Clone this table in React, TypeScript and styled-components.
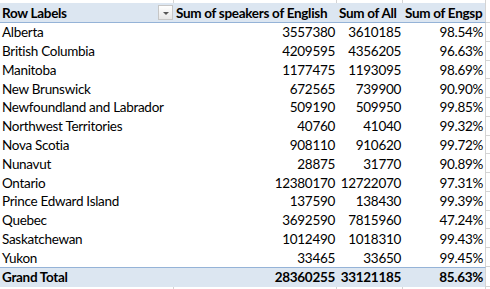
import React from "react";
import styled, { createGlobalStyle } from "styled-components";

const rows = [
  ["Alberta", "3557380", "3610185", "98.54%"],
  ["British Columbia", "4209595", "4356205", "96.63%"],
  ["Manitoba", "1177475", "1193095", "98.69%"],
  ["New Brunswick", "672565", "739900", "90.90%"],
  ["Newfoundland and Labrador", "509190", "509950", "99.85%"],
  ["Northwest Territories", "40760", "41040", "99.32%"],
  ["Nova Scotia", "908110", "910620", "99.72%"],
  ["Nunavut", "28875", "31770", "90.89%"],
  ["Ontario", "12380170", "12722070", "97.31%"],
  ["Prince Edward Island", "137590", "138430", "99.39%"],
  ["Quebec", "3692590", "7815960", "47.24%"],
  ["Saskatchewan", "1012490", "1018310", "99.43%"],
  ["Yukon", "33465", "33650", "99.45%"],
];

const GlobalStyle = createGlobalStyle`
  html, body {
    margin: 0;
    padding: 0;
    background: #fff;
  }
  body {
    font-family: Lato, "Liberation Sans", sans-serif;
    font-size: 13.5px;
    letter-spacing: -0.3px;
    color: #000;
  }
`;

const GRID = "#d4d4d4";
const BLUE_LINE = "#95b3d7";
const FILL = "#dce6f1";

type Kind = "head" | "total" | "body" | "edge";

const Sheet = styled.div`
  width: 490px;
  height: 289px;
  overflow: hidden;
`;

const Row = styled.div<{ $h: string; $kind?: Kind }>`
  display: grid;
  grid-template-columns: 174px 163px 66px 83px 1fr;
  height: ${(p) => p.$h};
  box-sizing: border-box;
  font-weight: ${(p) => (p.$kind === "head" || p.$kind === "total" ? 700 : 400)};
`;

const Cell = styled.div<{ $kind?: Kind; $right?: boolean; $last?: boolean }>`
  display: flex;
  align-items: center;
  justify-content: ${(p) => (p.$right ? "flex-end" : "space-between")};
  padding: ${(p) => (p.$right ? "0 2px 0 0" : "0 0 0 2px")};
  box-sizing: border-box;
  white-space: nowrap;
  overflow: hidden;
  background: ${(p) => (p.$kind === "head" || p.$kind === "total" ? FILL : "#fff")};
  border-right: ${(p) => (p.$kind === "edge" || p.$last ? `1px solid ${GRID}` : "none")};
  border-bottom: ${(p) => (p.$kind === "head" ? `1px solid ${BLUE_LINE}` : "none")};
  border-top: ${(p) => (p.$kind === "total" ? `1px solid ${BLUE_LINE}` : "none")};
`;

const Spare = styled.div<{ $line?: boolean }>`
  border-bottom: ${(p) => (p.$line ? `1px solid ${GRID}` : "none")};
  box-sizing: border-box;
`;

const FilterButton = styled.div`
  width: 15px;
  height: 15px;
  margin-right: 1px;
  flex: none;
  box-sizing: border-box;
  border: 1px solid #c6c6c6;
  background: linear-gradient(#ffffff, #e6e6e6);
  display: flex;
  align-items: center;
  justify-content: center;
  &::after {
    content: "";
    border-left: 3px solid transparent;
    border-right: 3px solid transparent;
    border-top: 3px solid #555;
    margin-top: 1px;
  }
`;

export default function App() {
  return (
    <Sheet>
      <GlobalStyle />
      <Row $h="3px" $kind="edge">
        <Cell $kind="edge" />
        <Cell $kind="edge" />
        <Cell $kind="edge" />
        <Cell $kind="edge" />
        <Spare />
      </Row>
      <Row $h="20px" $kind="head">
        <Cell $kind="head">
          Row Labels
          <FilterButton />
        </Cell>
        <Cell $kind="head">Sum of speakers of English</Cell>
        <Cell $kind="head">Sum of All</Cell>
        <Cell $kind="head" $last>Sum of Engsp</Cell>
        <Spare $line />
      </Row>
      {rows.map((r, i) => (
        <Row $h="18.77px" key={i}>
          <Cell>{r[0]}</Cell>
          <Cell $right>{r[1]}</Cell>
          <Cell $right>{r[2]}</Cell>
          <Cell $right $last>{r[3]}</Cell>
          <Spare $line />
        </Row>
      ))}
      <Row $h="20px" $kind="total">
        <Cell $kind="total">Grand Total</Cell>
        <Cell $kind="total" $right>28360255</Cell>
        <Cell $kind="total" $right>33121185</Cell>
        <Cell $kind="total" $right $last>85.63%</Cell>
        <Spare $line />
      </Row>
      <Row $h="10px" $kind="edge">
        <Cell $kind="edge" />
        <Cell $kind="edge" />
        <Cell $kind="edge" />
        <Cell $kind="edge" />
        <Spare />
      </Row>
    </Sheet>
  );
}
